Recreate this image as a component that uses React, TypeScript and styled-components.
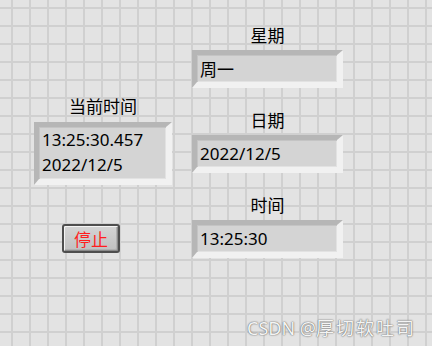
import React from "react";
import styled, { createGlobalStyle } from "styled-components";

const GlobalStyle = createGlobalStyle`
  html, body { margin: 0; padding: 0; }
  body { width: 432px; height: 346px; overflow: hidden; }
`;

const Panel = styled.div`
  width: 432px;
  height: 346px;
  box-sizing: border-box;
  padding: 22px 0 0 34px;
  display: flex;
  flex-direction: column;
  background-color: #e3e3e3;
  background-image: linear-gradient(to right, #d0d0d0 2px, transparent 2px),
    linear-gradient(to bottom, #d0d0d0 2px, transparent 2px);
  background-size: 18px 18px;
  background-position: 11px 7px;
  font-family: "Noto Sans", "Noto Sans CJK SC", sans-serif;
  color: #111;
`;

const Row = styled.div`
  display: flex;
  gap: 20px;
`;

const Column = styled.div<{ $width: number; $top: number; $gap?: number }>`
  width: ${(p) => p.$width}px;
  padding-top: ${(p) => p.$top}px;
  display: flex;
  flex-direction: column;
  gap: ${(p) => p.$gap ?? 0}px;
`;

const Group = styled.div`
  display: flex;
  flex-direction: column;
`;

const Label = styled.div`
  height: 24px;
  line-height: 24px;
  font-size: 17px;
  text-align: center;
  font-family: "Noto Sans CJK SC", sans-serif;
  color: #000;
`;

const Indicator = styled.div<{ $height: number; $gapTop: number }>`
  box-sizing: border-box;
  height: ${(p) => p.$height}px;
  margin-top: ${(p) => p.$gapTop}px;
  border-style: solid;
  border-width: 5px 6px 6px 5px;
  border-color: #b6b6b6 #f1f1f1 #f1f1f1 #b6b6b6;
  background: #d4d4d4;
  box-shadow: inset 1px 1px 0 #c4c4c4, inset -1px -1px 0 #e2e2e2;
  font-size: 17px;
  color: #000;
  display: flex;
  flex-direction: column;
  justify-content: center;
  padding: 0 3px;
`;

const MultiText = styled.div`
  line-height: 25px;
  padding: 0 0 2px;
  white-space: nowrap;
`;

const StopButton = styled.button`
  box-sizing: border-box;
  width: 58px;
  height: 29px;
  margin: 39px 0 0 28px;
  padding: 0;
  border: 2px solid #4e4e4e;
  border-radius: 3px;
  background: linear-gradient(to bottom, #d4d4d4, #c0c0c0);
  box-shadow: inset 1px 1px 0 #f4f4f4, inset -1px -1px 0 #8a8a8a,
    inset -2px -2px 0 #b0b0b0;
  color: #ff1e1e;
  font-family: "Noto Sans CJK SC", sans-serif;
  font-size: 17px;
  line-height: 23px;
  cursor: pointer;
`;

const Watermark = styled.div`
  margin-top: auto;
  align-self: flex-end;
  margin-right: 16px;
  margin-bottom: 7px;
  height: 24px;
  line-height: 24px;
  font-size: 18px;
  color: #f4f4f4;
  text-shadow: 0 0 1px #555, 0 0 2px #8a8a8a;
  font-family: "Noto Sans", "Noto Sans CJK SC", sans-serif;
  white-space: nowrap;
`;

const CjkPart = styled.span`
  letter-spacing: 2px;
  font-family: "Noto Sans CJK SC", sans-serif;
`;

export default function App() {
  return (
    <>
      <GlobalStyle />
      <Panel>
        <Row>
          <Column $width={138} $top={72}>
            <Group>
              <Label>当前时间</Label>
              <Indicator $height={63} $gapTop={4}>
                <MultiText>
                  13:25:30.457
                  <br />
                  2022/12/5
                </MultiText>
              </Indicator>
            </Group>
            <StopButton>停止</StopButton>
          </Column>
          <Column $width={151} $top={1} $gap={20}>
            <Group>
              <Label>星期</Label>
              <Indicator $height={38} $gapTop={3}>周一</Indicator>
            </Group>
            <Group>
              <Label>日期</Label>
              <Indicator $height={38} $gapTop={3}>2022/12/5</Indicator>
            </Group>
            <Group>
              <Label>时间</Label>
              <Indicator $height={38} $gapTop={3}>13:25:30</Indicator>
            </Group>
          </Column>
        </Row>
        <Watermark>
          CSDN @<CjkPart>厚切软吐司</CjkPart>
        </Watermark>
      </Panel>
    </>
  );
}
